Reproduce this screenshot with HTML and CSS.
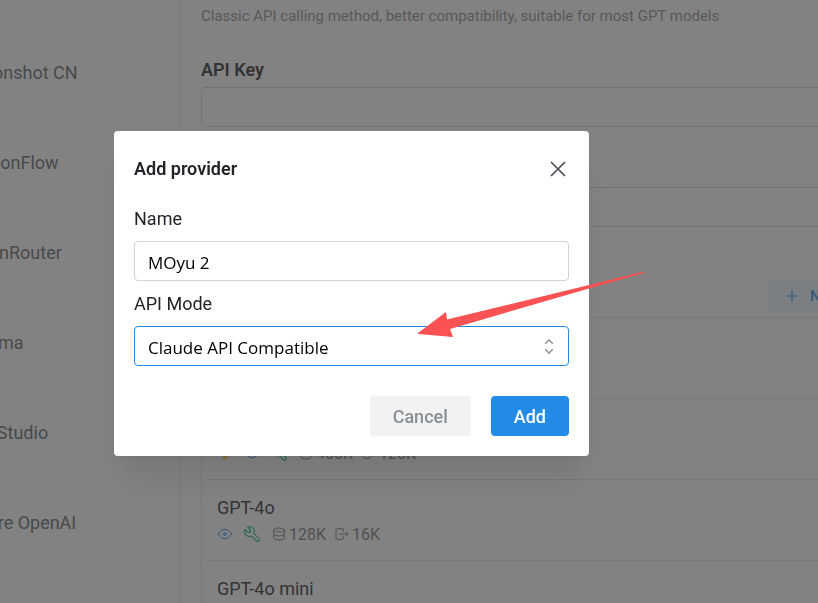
FILE: index.html
```
<!DOCTYPE html>
<html lang="en">
<head>
	<meta charset="utf-8">
	<title>Providers</title>
	<link rel="stylesheet" href="styles.css">
</head>
<body>

	<!-- shared icons -->
	<svg class="sprite" aria-hidden="true">
		<symbol id="icon-eye" viewBox="0 0 24 24">
			<path d="M10 12a2 2 0 1 0 4 0a2 2 0 0 0 -4 0"/>
			<path d="M22 12c-2.7 4.7 -6 7 -10 7s-7.300 -2.300 -10 -7c2.700 -4.700 6 -7 10 -7s7.300 2.300 10 7"/>
		</symbol>
		<symbol id="icon-tool" viewBox="2 2 20 20">
			<path d="M7 10h3v-3l-3.500 -3.500a6 6 0 0 1 8 8l6 6a2 2 0 0 1 -3 3l-6 -6a6 6 0 0 1 -8 -8l3.500 3.500"/>
		</symbol>
		<symbol id="icon-bulb" viewBox="0 0 24 24">
			<path d="M9 16a5 5 0 1 1 6 0a3.500 3.500 0 0 0 -1 3a2 2 0 0 1 -4 0a3.500 3.500 0 0 0 -1 -3M9.700 17h4.600"/>
		</symbol>
		<symbol id="icon-database" viewBox="0 0 24 24">
			<path d="M4 6a8 3 0 1 0 16 0a8 3 0 1 0 -16 0"/>
			<path d="M4 6v6a8 3 0 0 0 16 0v-6"/>
			<path d="M4 12v6a8 3 0 0 0 16 0v-6"/>
		</symbol>
		<symbol id="icon-output" viewBox="0 0 24 24">
			<path d="M14 8v-2a2 2 0 0 0 -2 -2h-7a2 2 0 0 0 -2 2v12a2 2 0 0 0 2 2h7a2 2 0 0 0 2 -2v-2"/>
			<path d="M9 12h12l-3 -3M18 15l3 -3"/>
		</symbol>
	</svg>

	<div class="page">
		<nav class="sidebar">
			<a class="provider" href="#">Moonshot CN</a>
			<a class="provider" href="#">SiliconFlow</a>
			<a class="provider" href="#">OpenRouter</a>
			<a class="provider" href="#">Ollama</a>
			<a class="provider" href="#">LM Studio</a>
			<a class="provider" href="#">Azure OpenAI</a>
		</nav>

		<main class="settings">
			<p class="hint">Classic API calling method, better compatibility, suitable for most GPT models</p>

			<label class="settings-label" for="apiKey">API Key</label>
			<input class="settings-input" id="apiKey" type="text">

			<label class="settings-label" for="apiHost">API Host</label>
			<input class="settings-input" id="apiHost" type="text">

			<div class="models-header">
				<button class="new-button" type="button">
					<svg class="icon" viewBox="0 0 24 24"><path d="M12 4v16M4 12h16"/></svg>
					New
				</button>
			</div>

			<div class="models">
				<div class="model">
					<div class="model-name">GPT-5</div>
				</div>
				<div class="model">
					<div class="model-name">GPT-5 mini</div>
					<div class="model-info">
						<svg class="icon orange"><use href="#icon-bulb"/></svg>
						<svg class="icon blue"><use href="#icon-eye"/></svg>
						<svg class="icon green"><use href="#icon-tool"/></svg>
						<div class="sizes">
							<span class="size"><svg class="icon"><use href="#icon-database"/></svg>400K</span>
							<span class="size"><svg class="icon"><use href="#icon-output"/></svg>128K</span>
						</div>
					</div>
				</div>
				<div class="model">
					<div class="model-name">GPT-4o</div>
					<div class="model-info">
						<svg class="icon blue"><use href="#icon-eye"/></svg>
						<svg class="icon green"><use href="#icon-tool"/></svg>
						<div class="sizes">
							<span class="size"><svg class="icon"><use href="#icon-database"/></svg>128K</span>
							<span class="size"><svg class="icon"><use href="#icon-output"/></svg>16K</span>
						</div>
					</div>
				</div>
				<div class="model">
					<div class="model-name">GPT-4o mini</div>
				</div>
			</div>
		</main>
	</div>

	<div class="overlay">
		<div class="modal" role="dialog" aria-labelledby="modalTitle">
			<div class="modal-header">
				<h2 class="modal-title" id="modalTitle">Add provider</h2>
				<button class="close-button" type="button" aria-label="Close">
					<svg viewBox="0 0 16 16"><path d="M1 1l14 14M15 1l-14 14"/></svg>
				</button>
			</div>
			<form>
				<label class="field-label" for="name">Name</label>
				<input class="field" id="name" type="text" value="MOyu 2">

				<label class="field-label" for="apiMode">API Mode</label>
				<div class="select-wrap">
					<select class="field field-active" id="apiMode">
						<option>Claude API Compatible</option>
					</select>
					<svg class="chevrons" viewBox="0 0 10 16"><path d="M1 5l4 -4l4 4M1 11l4 4l4 -4"/></svg>
				</div>

				<div class="modal-buttons">
					<button class="button cancel" type="button">Cancel</button>
					<button class="button add" type="submit">Add</button>
				</div>
			</form>

			<!-- arrow pointing at the API mode -->
			<svg class="arrow" viewBox="0 0 228 68" aria-hidden="true">
				<path d="M1 62L29 41L30 48.500L172 14L227 0.500L227 2L172 17.500L33 58L36 66L1 63Z"/>
			</svg>
		</div>
	</div>

</body>
</html>
```
FILE: styles.css
```
* {
	box-sizing: border-box;
}

body {
	margin: 0;
	height: 100vh;
	overflow: hidden;
	background: #fff;
	color: #212529;
	font-family: Roboto, "Liberation Sans", sans-serif;
	font-size: 18px;
}

button,
input,
select {
	font-family: inherit;
}

.sprite {
	display: none;
}

.icon {
	width: 16px;
	height: 16px;
	flex: none;
	fill: none;
	stroke: currentColor;
	stroke-width: 1.5;
	stroke-linecap: round;
	stroke-linejoin: round;
}

.page {
	display: flex;
	height: 100%;
	overflow: hidden;
}

.sidebar {
	flex: none;
	width: 214px;
	margin-left: -33px;
	padding-top: 28px;
	border-right: 1px solid #dee2e6;
}

.provider {
	display: block;
	height: 90px;
	line-height: 90px;
	color: #5c636a;
	text-decoration: none;
}

.settings {
	flex: none;
	width: calc(100% - 101px);
	padding: 4px 20px;
}

.hint {
	margin: 0 0 28px;
	color: #868e96;
	font-size: 15px;
	line-height: 24px;
}

.settings-label {
	display: block;
	height: 31px;
	font-weight: 600;
	line-height: 28px;
}

.settings-input {
	display: block;
	width: 100%;
	height: 40px;
	margin-bottom: 29px;
	border: 1px solid #ced4da;
	border-radius: 4px;
	background: #fff;
}

.models-header {
	display: flex;
	justify-content: flex-end;
	height: 36px;
	margin-top: 54px;
}

.new-button {
	display: flex;
	align-items: center;
	gap: 10px;
	width: 110px;
	height: 30px;
	padding: 0 16px;
	border: 0;
	border-radius: 4px;
	background: #e7f5ff;
	color: #228be6;
	font-size: 15px;
	font-weight: 500;
}

.models {
	padding-left: 5px;
	border-left: 1px solid #dee2e6;
}

.model {
	height: 81px;
	padding: 16px 10px;
	border-top: 1px solid #dee2e6;
}

.model-name {
	line-height: 24px;
}

.model-info {
	display: flex;
	align-items: center;
	gap: 11px;
	height: 28px;
	color: #70777e;
	font-size: 16px;
}

.sizes {
	display: flex;
	gap: 8px;
}

.size {
	display: flex;
	align-items: center;
	gap: 2px;
}

.blue {
	color: #228be6;
}

.green {
	color: #12b886;
}

.orange {
	color: #fab005;
}

.overlay {
	position: fixed;
	inset: 0;
	display: flex;
	align-items: center;
	justify-content: center;
	padding: 0 115px 16px 0;
	background: rgba(60, 60, 60, 0.64);
}

.modal {
	position: relative;
	width: 475px;
	padding: 20px;
	border-radius: 4px;
	background: #fff;
	box-shadow: 0 1px 3px rgba(0, 0, 0, 0.05), 0 36px 28px -7px rgba(0, 0, 0, 0.05), 0 17px 17px -7px rgba(0, 0, 0, 0.04);
}

.modal-header {
	display: flex;
	align-items: center;
	justify-content: space-between;
	height: 35px;
	margin-bottom: 10px;
}

.modal-title {
	margin: 0;
	font-size: 18px;
	font-weight: 600;
}

.close-button {
	display: flex;
	padding: 3px;
	border: 0;
	background: none;
	color: #495057;
}

.close-button svg {
	width: 16px;
	height: 16px;
	fill: none;
	stroke: currentColor;
	stroke-width: 1.75;
}

.field-label {
	display: block;
	padding: 10px 0;
	line-height: 25px;
}

.field {
	display: block;
	width: 100%;
	height: 40px;
	padding: 2px 13px 0;
	border: 1px solid #ced4da;
	border-radius: 4px;
	background: #fff;
	color: #000;
	font-family: "Open Sans", "Noto Sans", sans-serif;
	font-size: 17px;
	appearance: none;
}

.field-active {
	border-color: #228be6;
}

.select-wrap {
	position: relative;
}

.chevrons {
	position: absolute;
	top: 13px;
	right: 15px;
	width: 10px;
	height: 15px;
	fill: none;
	stroke: #868e96;
	stroke-width: 1.5;
	pointer-events: none;
}

.modal-buttons {
	display: flex;
	justify-content: flex-end;
	gap: 20px;
	margin-top: 30px;
}

.button {
	height: 40px;
	padding: 0 23px;
	border: 0;
	border-radius: 4px;
	font-size: 18px;
	font-weight: 500;
}

.cancel {
	background: #f2f2f2;
	color: #868e96;
}

.add {
	background: #228be6;
	color: #fff;
}

.arrow {
	position: absolute;
	top: 140px;
	left: 303px;
	width: 228px;
	height: 68px;
	fill: #fa5252;
	pointer-events: none;
}
```
